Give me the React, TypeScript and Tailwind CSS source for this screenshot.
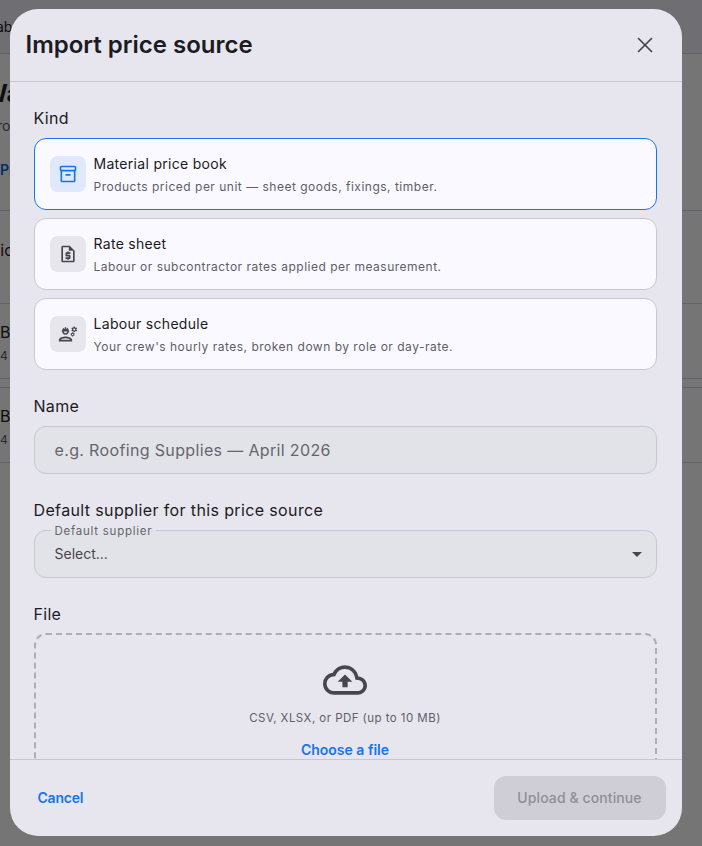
import { X } from 'lucide-react';
import { MdOutlineInventory2, MdOutlineRequestQuote, MdOutlineEngineering, MdOutlineCloudUpload, MdArrowDropDown } from 'react-icons/md';
import type { ReactNode } from 'react';

type Kind = {
  title: string;
  desc: string;
  icon: ReactNode;
  selected?: boolean;
};

const kinds: Kind[] = [
  {
    title: 'Material price book',
    desc: 'Products priced per unit — sheet goods, fixings, timber.',
    icon: <MdOutlineInventory2 size={20} />,
    selected: true,
  },
  {
    title: 'Rate sheet',
    desc: 'Labour or subcontractor rates applied per measurement.',
    icon: <MdOutlineRequestQuote size={20} />,
  },
  {
    title: 'Labour schedule',
    desc: "Your crew's hourly rates, broken down by role or day-rate.",
    icon: <MdOutlineEngineering size={20} />,
  },
];

const Background = () => (
  <div className="h-[846px] overflow-hidden bg-[#eaeaea] text-[#1c1b1f]">
    <div className="h-[54px] border-b border-[#c6c4d0] bg-[#dedde6] pt-[17px] text-sm">
      <span className="-ml-3">Tab</span>
    </div>
    <div className="h-[157px] border-b border-[#c6c4d0]">
      <div className="-ml-[17px] pt-[24px] text-2xl font-bold">Wa</div>
      <div className="-ml-3 pt-[6px] text-sm text-[#55545c]">Pro</div>
      <div className="pt-[24px] text-sm font-semibold text-[#0b5cc9]">Pr</div>
    </div>
    <div className="h-[93px] border-b border-[#c6c4d0] pt-[27px] text-base">
      <div className="-ml-[10px]">Tic</div>
    </div>
    <div className="h-[75px] border-b border-[#c6c4d0] pt-[16px] text-base">
      <div>B</div>
      <div className="pt-[4px] text-xs text-[#55545c]">4</div>
    </div>
    <div className="mt-[8px] h-[76px] border-t border-b border-[#c6c4d0] pt-[16px] text-base">
      <div>B</div>
      <div className="pt-[4px] text-xs text-[#55545c]">4</div>
    </div>
  </div>
);

const KindCard = ({ kind }: { kind: Kind }) => (
  <div
    className={`flex h-[72px] items-center gap-[8px] rounded-[12px] border bg-[#f9f9ff] pl-[15px] ${
      kind.selected ? 'border-[#1574ee]' : 'border-[#c8c7d1]'
    }`}
  >
    <div
      className={`flex h-[36px] w-[36px] shrink-0 items-center justify-center rounded-[8px] ${
        kind.selected ? 'bg-[#e0e9fb] text-[#1574ee]' : 'bg-[#e7e6ed] text-[#47464f]'
      }`}
    >
      {kind.icon}
    </div>
    <div className="pt-[2px]">
      <div className="text-sm leading-[20px] font-normal tracking-[0.3px] text-[#1c1b22]">{kind.title}</div>
      <div className="mt-[4px] text-xs leading-[18px] tracking-[0.5px] text-[#5f5e67]">{kind.desc}</div>
    </div>
  </div>
);

export default function App() {
  return (
    <div className="relative h-[846px] overflow-hidden font-['Inter',sans-serif]">
      <Background />
      <div className="absolute inset-0 bg-black/50 pt-[9px] pl-[9.5px]">
        <div className="flex h-[827px] w-[672px] flex-col overflow-hidden rounded-[28px] bg-[#e7e6ef]">
          <div className="flex h-[73px] shrink-0 items-center justify-between border-b border-[#c8c7d1] pr-[24px] pl-[16px]">
            <h1 className="text-2xl font-semibold text-[#1c1b22]">Import price source</h1>
            <X size={26} strokeWidth={1.6} className="text-[#47464f]" />
          </div>

          <div className="flex-1 overflow-hidden pr-[25px] pl-[24px]">
            <div className="pt-[26px] text-base leading-[20px] tracking-[0.3px] text-[#1c1b22]">Kind</div>
            <div className="mt-[10px] flex flex-col gap-[8px]">
              {kinds.map((kind) => (
                <KindCard key={kind.title} kind={kind} />
              ))}
            </div>

            <div className="mt-[26px] text-base leading-[20px] tracking-[0.3px] text-[#1c1b22]">Name</div>
            <div className="mt-[10px] flex h-[48px] items-center rounded-[12px] border border-[#c8c7d1] bg-[#e2e3e8] px-[20px] text-base tracking-[0.35px] text-[#66656d]">
              e.g. Roofing Supplies — April 2026
            </div>

            <div className="mt-[26px] text-base leading-[20px] tracking-[0.37px] text-[#1c1b22]">
              Default supplier for this price source
            </div>
            <fieldset className="mt-[4px] flex h-[54px] items-start justify-between rounded-[12px] border border-[#c8c7d1] bg-[#e2e3e8] pr-[7px] pl-[20px]">
              <legend className="-ml-[4px] px-[4px] pt-[2px] text-[11.5px] leading-[1] tracking-[0.75px] text-[#66656d]">Default supplier</legend>
              <span className="pt-[6px] text-sm leading-[20px] text-[#47464f]">Select...</span>
              <MdArrowDropDown size={24} className="mt-[4px] text-[#47464f]" />
            </fieldset>

            <div className="mt-[26px] text-base leading-[20px] tracking-[0.3px] text-[#1c1b22]">File</div>
            <div className="mt-[9px] flex h-[180px] flex-col items-center rounded-[12px] border-2 border-dashed border-[#aeadb6] pt-[23px]">
              <MdOutlineCloudUpload size={44} className="text-[#47464f]" />
              <div className="mt-[7px] text-[11.5px] leading-[18px] tracking-[0.45px] text-[#5f5e67]">CSV, XLSX, or PDF (up to 10 MB)</div>
              <div className="mt-[13px] text-sm leading-[20px] font-semibold text-[#1574ee]">Choose a file</div>
            </div>
          </div>

          <div className="flex h-[77px] shrink-0 items-center justify-between border-t border-[#c8c7d1] pr-[16px] pl-[28px]">
            <span className="text-sm font-semibold tracking-[-0.2px] text-[#1574ee]">Cancel</span>
            <div className="flex h-[44px] w-[172px] items-center justify-center rounded-[12px] bg-[#cfced6] text-sm font-medium tracking-[0.1px] text-[#8f8e96]">
              Upload &amp; continue
            </div>
          </div>
        </div>
      </div>
    </div>
  );
}
